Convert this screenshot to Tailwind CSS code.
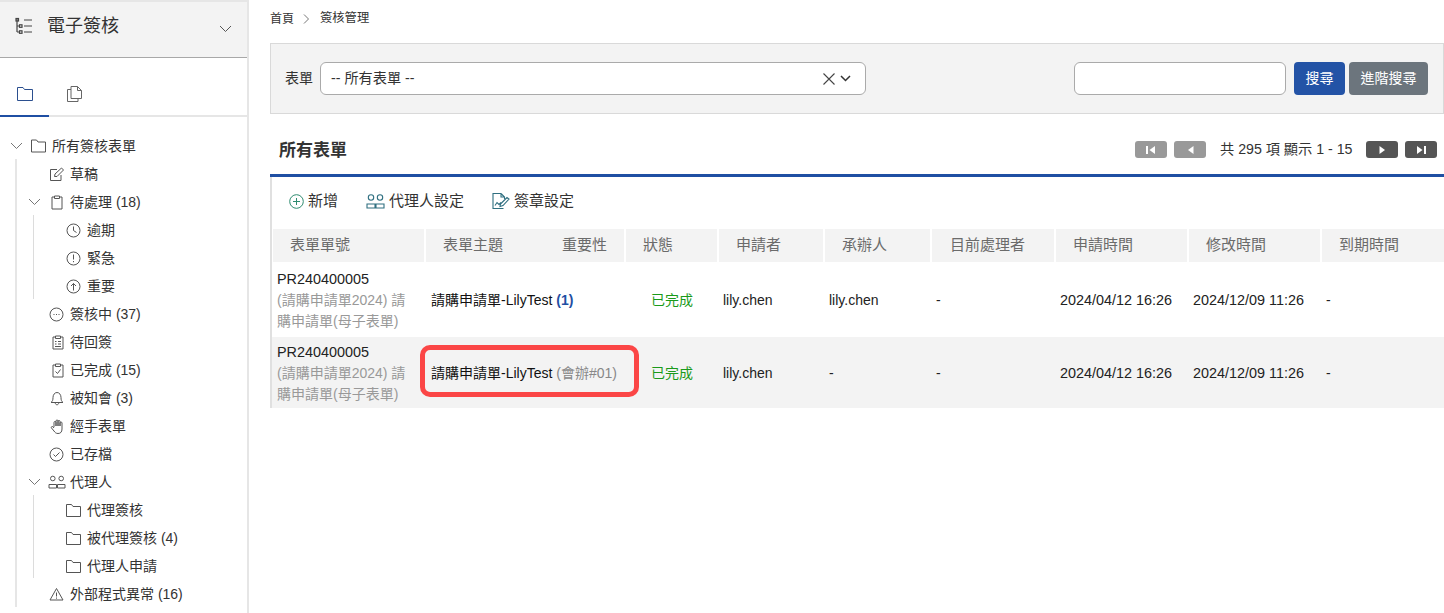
<!DOCTYPE html>
<html lang="zh-Hant">
<head>
  <meta charset="UTF-8" />
  <title>電子簽核</title>
  <script src="https://cdn.jsdelivr.net/npm/@tailwindcss/browser@4"></script>
</head>
<body class="bg-white h-[613px] overflow-hidden font-['Liberation_Sans','Noto_Sans_CJK_TC',sans-serif] text-[14px] text-[#222]">
<div class="flex h-[613px]">

  <!-- Sidebar -->
  <aside class="w-[249px] h-full shrink-0 border-r-2 border-[#e6e6e6] overflow-hidden">
    <div class="h-[58px] bg-[#f3f3f3] border-t-2 border-b border-t-[#e6e6e6] border-b-[#a8a8a8] flex items-center pl-[15px] pr-[15px] pb-[8px]">
      <svg class="mt-[2px] w-[19px] h-[19px] text-[#444]" viewBox="0 0 19 19" fill="none" stroke="currentColor" stroke-width="1.2"><path d="M2 2v13M2 9h3M2 15h3"/><rect x="1" y="1.5" width="2.5" height="2.5"/><rect x="4.5" y="7.8" width="2.5" height="2.5"/><rect x="4.5" y="13.8" width="2.5" height="2.5"/><path d="M9 3h8M9 9h8M9 15h8"/></svg>
      <span class="ml-[13px] text-[18px] text-[#333] leading-none">電子簽核</span>
      <svg class="ml-auto mt-[7px] w-[13px] h-[8px] text-[#555]" viewBox="0 0 13 8" fill="none" stroke="currentColor" stroke-width="1"><path d="M1 1l5.500 5.500L12 1"/></svg>
    </div>

    <div class="h-[59px] flex border-b-2 border-[#e6e6e6]">
      <div class="w-[49px] h-[59px] border-b-2 border-[#1f4fa3] flex justify-center pt-[29px]">
        <svg class="w-[16px] h-[14px] text-[#2b4f8f]" viewBox="0 0 16 14" fill="none" stroke="currentColor" stroke-width="1"><path d="M.5 13.500V.5h5.500l1.500 2h8v11z"/></svg>
      </div>
      <div class="w-[49px] pl-[18px] pt-[28px]">
        <svg class="w-[15px] h-[16px] text-[#666]" viewBox="0 0 15 16" fill="none" stroke="currentColor" stroke-width="1"><path d="M4 .5h6.500l4 4V12.500H4zM10.500.5v4h4M4 3.500H.5v12H11v-3"/></svg>
      </div>
    </div>

    <!-- Tree -->
    <nav class="relative pt-[15px] text-[#333]">
      <span class="absolute left-[15px] top-[42px] h-[448px] w-[2px] bg-[#e6e6e6]"></span>
      <span class="absolute left-[33px] top-[98px] h-[84px] w-[1px] bg-[#dcdcdc]"></span>
      <span class="absolute left-[33px] top-[378px] h-[83px] w-[1px] bg-[#dcdcdc]"></span>

      <div class="h-[28px] flex items-center pl-[10px] gap-[6px]">
        <svg class="w-[13px] h-[8px] text-[#777]" viewBox="0 0 13 8" fill="none" stroke="currentColor"><path d="M1 1l5.500 5.500L12 1"/></svg>
        <svg class="ml-[2px] w-[15px] h-[14px] text-[#555]" viewBox="0 0 15 14" fill="none" stroke="currentColor"><path d="M.5 13V1h5L7 3h7.500v10z"/></svg>
        <span>所有簽核表單</span>
      </div>
      <div class="h-[28px] flex items-center pl-[49px] gap-[6px]">
        <svg class="w-[15px] h-[15px] text-[#555]" viewBox="0 0 15 15" fill="none" stroke="currentColor"><path d="M12 8v5.500H1.500v-11H8M5.500 9.500l.5-2.500 6.500-6 2 2-6.500 6.500z"/></svg>
        <span>草稿</span>
      </div>
      <div class="h-[28px] flex items-center pl-[28px]">
        <svg class="w-[13px] h-[8px] text-[#777]" viewBox="0 0 13 8" fill="none" stroke="currentColor"><path d="M1 1l5.500 5.500L12 1"/></svg>
        <svg class="ml-[10px] w-[12px] h-[15px] text-[#555]" viewBox="0 0 12 15" fill="none" stroke="currentColor"><path d="M3.500 2H1v12h10V2H8.500M3.500 1h5v2.500h-5z"/></svg>
        <span class="ml-[7px]">待處理 (18)</span>
      </div>
      <div class="h-[28px] flex items-center pl-[66px] gap-[6px]">
        <svg class="w-[15px] h-[15px] text-[#555]" viewBox="0 0 15 15" fill="none" stroke="currentColor"><circle cx="7.500" cy="7.500" r="6.500"/><path d="M7.500 3.500v4l3 2"/></svg>
        <span>逾期</span>
      </div>
      <div class="h-[28px] flex items-center pl-[66px] gap-[6px]">
        <svg class="w-[15px] h-[15px] text-[#555]" viewBox="0 0 15 15" fill="none" stroke="currentColor"><circle cx="7.500" cy="7.500" r="6.500"/><path d="M7.500 3.500v5M7.500 10v1.200"/></svg>
        <span>緊急</span>
      </div>
      <div class="h-[28px] flex items-center pl-[66px] gap-[6px]">
        <svg class="w-[15px] h-[15px] text-[#555]" viewBox="0 0 15 15" fill="none" stroke="currentColor"><circle cx="7.500" cy="7.500" r="6.500"/><path d="M7.500 11.500v-7M5 7l2.500-2.500L10 7"/></svg>
        <span>重要</span>
      </div>
      <div class="h-[28px] flex items-center pl-[49px] gap-[6px]">
        <svg class="w-[15px] h-[15px] text-[#555]" viewBox="0 0 15 15" fill="none" stroke="currentColor"><circle cx="7.500" cy="7.500" r="6.500"/><path d="M4.500 7.500h1M7 7.500h1M9.500 7.500h1"/></svg>
        <span>簽核中 (37)</span>
      </div>
      <div class="h-[28px] flex items-center pl-[52px] gap-[6px]">
        <svg class="w-[12px] h-[15px] text-[#555]" viewBox="0 0 12 15" fill="none" stroke="currentColor"><path d="M3.500 2H1v12h10V2H8.500M3.500 1h5v2.500h-5zM3 6.500h1.500M6 6.500h3M3 9h1.500M6 9h3M3 11.500h6"/></svg>
        <span>待回簽</span>
      </div>
      <div class="h-[28px] flex items-center pl-[52px] gap-[6px]">
        <svg class="w-[12px] h-[15px] text-[#555]" viewBox="0 0 12 15" fill="none" stroke="currentColor"><path d="M3.500 2H1v12h10V2H8.500M3.500 1h5v2.500h-5zM3.500 8.500l2 2 3-4"/></svg>
        <span>已完成 (15)</span>
      </div>
      <div class="h-[28px] flex items-center pl-[50px] gap-[6px]">
        <svg class="w-[14px] h-[15px] text-[#555]" viewBox="0 0 14 15" fill="none" stroke="currentColor"><path d="M1 11.500c1.500-1 2-2.500 2-5S4.500 1.500 7 1.500 11 4 11 6.500s.5 4 2 5zM5.200 11.500c0 3 3.600 3 3.600 0"/></svg>
        <span>被知會 (3)</span>
      </div>
      <div class="h-[28px] flex items-center pl-[50px] gap-[6px]">
        <svg class="w-[14px] h-[15px] text-[#555]" viewBox="0 0 14 15" fill="none" stroke="currentColor"><path d="M4 8V3.500a1 1 0 012 0V7M6 7V2a1 1 0 012 0v5M8 7V2.500a1 1 0 012 0V7M10 7V4a1 1 0 012 0v6c0 3-1.500 4.500-4 4.500-2 0-3-1-4-2.500L1.500 9c-.8-1 .5-2 1.500-1.200L4 9"/></svg>
        <span>經手表單</span>
      </div>
      <div class="h-[28px] flex items-center pl-[49px] gap-[6px]">
        <svg class="w-[15px] h-[15px] text-[#555]" viewBox="0 0 15 15" fill="none" stroke="currentColor"><circle cx="7.500" cy="7.500" r="6.500"/><path d="M4.500 7.500l2 2 4-4"/></svg>
        <span>已存檔</span>
      </div>
      <div class="h-[28px] flex items-center pl-[28px]">
        <svg class="w-[13px] h-[8px] text-[#777]" viewBox="0 0 13 8" fill="none" stroke="currentColor"><path d="M1 1l5.500 5.500L12 1"/></svg>
        <svg class="ml-[7px] w-[18px] h-[14px] text-[#555]" viewBox="0 0 18 14" fill="none" stroke="currentColor"><circle cx="4.800" cy="3.500" r="2.300"/><circle cx="13.200" cy="3.500" r="2.300"/><path d="M1 13V9.500h7.500V13zM9.500 13V9.500H17V13z"/></svg>
        <span class="ml-[4px]">代理人</span>
      </div>
      <div class="h-[28px] flex items-center pl-[66px] gap-[6px]">
        <svg class="w-[15px] h-[13px] text-[#555]" viewBox="0 0 15 13" fill="none" stroke="currentColor"><path d="M.5 12.500V.5h5L7 2.500h7.500v10z"/></svg>
        <span>代理簽核</span>
      </div>
      <div class="h-[28px] flex items-center pl-[66px] gap-[6px]">
        <svg class="w-[15px] h-[13px] text-[#555]" viewBox="0 0 15 13" fill="none" stroke="currentColor"><path d="M.5 12.500V.5h5L7 2.500h7.500v10z"/></svg>
        <span>被代理簽核 (4)</span>
      </div>
      <div class="h-[28px] flex items-center pl-[66px] gap-[6px]">
        <svg class="w-[15px] h-[13px] text-[#555]" viewBox="0 0 15 13" fill="none" stroke="currentColor"><path d="M.5 12.500V.5h5L7 2.500h7.500v10z"/></svg>
        <span>代理人申請</span>
      </div>
      <div class="h-[28px] flex items-center pl-[49px] gap-[6px]">
        <svg class="w-[15px] h-[14px] text-[#555]" viewBox="0 0 15 14" fill="none" stroke="currentColor"><path d="M7.500 1.500L14 13H1zM7.500 5.500v4M7.500 10.500v1.200"/></svg>
        <span>外部程式異常 (16)</span>
      </div>
    </nav>
  </aside>

  <!-- Main -->
  <main class="flex-1 min-w-0 pl-[21px]">
    <div class="h-[43px] flex items-center text-[12px] pb-[6px] text-[#333]">
      <span>首頁</span>
      <svg class="ml-[9px] mr-[10px] w-[7px] h-[10px] text-[#777]" viewBox="0 0 7 10" fill="none" stroke="currentColor"><path d="M1 .5L5.500 5 1 9.500"/></svg>
      <span class="text-[12.300px]">簽核管理</span>
    </div>

    <!-- Search bar -->
    <div class="h-[71px] bg-[#f3f3f3] border border-[#d9d9d9] flex items-center pl-[14px] pr-[15px]">
      <span class="text-[#333]">表單</span>
      <div class="ml-[7px] w-[546px] h-[33px] bg-white border border-[#aaa] rounded-[6px] flex items-center pl-[10px] pr-[14px]">
        <span class="text-[14.200px] text-[#333]">-- 所有表單 --</span>
        <svg class="ml-auto w-[12px] h-[12px] text-[#444]" viewBox="0 0 12 12" fill="none" stroke="currentColor" stroke-width="1.100"><path d="M.5.5l11 11M11.500.5l-11 11"/></svg>
        <svg class="ml-[5px] w-[11px] h-[7px] text-[#333]" viewBox="0 0 11 7" fill="none" stroke="currentColor" stroke-width="1.500"><path d="M1 1l4.500 4.500L10 1"/></svg>
      </div>
      <div class="ml-auto w-[212px] h-[33px] bg-white border border-[#aaa] rounded-[6px]"></div>
      <button class="ml-[8px] w-[51px] h-[33px] bg-[#2353a6] text-white text-[14px] rounded-[4px]">搜尋</button>
      <button class="ml-[4px] w-[79px] h-[33px] bg-[#6c757d] text-white text-[14px] rounded-[4px]">進階搜尋</button>
    </div>

    <!-- Title + pager -->
    <div class="h-[63px] border-b-[3px] border-[#1f4fa3] flex items-center pl-[9px] pr-[7px] pt-[12px]">
      <h1 class="text-[17px] font-bold text-[#333] mt-[2px]">所有表單</h1>
      <div class="ml-auto flex items-center">
        <span class="w-[32px] h-[17px] rounded-[3px] bg-[#999] flex items-center justify-center">
          <svg class="w-[10px] h-[8px]" viewBox="0 0 10 8" fill="white"><path d="M0 0h2v8H0zM9 0v8L3.500 4z"/></svg>
        </span>
        <span class="ml-[7px] w-[32px] h-[17px] rounded-[3px] bg-[#999] flex items-center justify-center">
          <svg class="w-[7px] h-[8px]" viewBox="0 0 7 8" fill="white"><path d="M6.500 0v8L1 4z"/></svg>
        </span>
        <span class="ml-[14px] w-[133px] text-[14.200px] text-[#333] whitespace-nowrap">共 295 項 顯示 1 - 15</span>
        <span class="ml-[13px] w-[32px] h-[17px] rounded-[3px] bg-[#555] flex items-center justify-center">
          <svg class="w-[7px] h-[8px]" viewBox="0 0 7 8" fill="white"><path d="M.5 0v8L6 4z"/></svg>
        </span>
        <span class="ml-[7px] w-[32px] h-[17px] rounded-[3px] bg-[#555] flex items-center justify-center">
          <svg class="w-[10px] h-[8px]" viewBox="0 0 10 8" fill="white"><path d="M1 0v8l5.500-4zM8 0h2v8H8z"/></svg>
        </span>
      </div>
    </div>

    <!-- List panel -->
    <section class="border-l-2 border-[#e0e0e0] h-[231px] overflow-hidden">
      <div class="h-[52px] flex items-center pl-[17px] pb-[4px] text-[15px] text-[#333]">
        <svg class="w-[15px] h-[15px] text-[#2e8b6f]" viewBox="0 0 15 15" fill="none" stroke="currentColor"><circle cx="7.500" cy="7.500" r="6.800"/><path d="M7.500 4v7M4 7.500h7"/></svg>
        <span class="ml-[4px]">新增</span>
        <svg class="ml-[28px] w-[19px] h-[15px] text-[#2f6f80]" viewBox="0 0 19 15" fill="none" stroke="currentColor" stroke-width="1.100"><circle cx="5" cy="3.500" r="2.700"/><circle cx="14" cy="3.500" r="2.700"/><path d="M1 14v-4h8v4zM10 14v-4h8v4z"/></svg>
        <span class="ml-[4px]">代理人設定</span>
        <svg class="ml-[28px] w-[18px] h-[17px] text-[#2f6f80]" viewBox="0 0 18 17" fill="none" stroke="currentColor" stroke-width="1.100"><path d="M9 .5H1v15h10.500M9 .5l3.500 3.500v2M9 .5V4h3.500M3 12.500l2-3 2 2 2-2M8.500 11L15 4.500l2 1.500-6 6.500-3 1z"/></svg>
        <span class="ml-[4px]">簽章設定</span>
      </div>

      <!-- Header row -->
      <div class="grid grid-cols-[151px_198px_91px_104px_105px_122px_131px_131px_122px] gap-x-[2px] ml-[1px] h-[33px] text-[15px] text-[#6b6b6b]">
        <div class="bg-[#f3f3f3] pl-[17px] flex items-center">表單單號</div>
        <div class="bg-[#f3f3f3] pl-[17px] pr-[17px] flex items-center justify-between"><span>表單主題</span><span>重要性</span></div>
        <div class="bg-[#f3f3f3] pl-[17px] flex items-center">狀態</div>
        <div class="bg-[#f3f3f3] pl-[17px] flex items-center">申請者</div>
        <div class="bg-[#f3f3f3] pl-[17px] flex items-center">承辦人</div>
        <div class="bg-[#f3f3f3] pl-[18px] flex items-center">目前處理者</div>
        <div class="bg-[#f3f3f3] pl-[17px] flex items-center">申請時間</div>
        <div class="bg-[#f3f3f3] pl-[17px] flex items-center">修改時間</div>
        <div class="bg-[#f3f3f3] pl-[17px] flex items-center">到期時間</div>
      </div>

      <!-- Row 1 -->
      <div class="grid grid-cols-[151px_198px_91px_104px_105px_122px_131px_131px_122px] gap-x-[2px] ml-[1px] h-[75px] pt-[2px] items-center text-[#222]">
        <div class="pl-[4px] pr-[14px] leading-[21px]"><div class="text-[14.400px]">PR240400005</div><div class="text-[#999]">(請購申請單2024) 請購申請單(母子表單)</div></div>
        <div class="pl-[5px]"><span class="text-[#111]">請購申請單-LilyTest</span> <span class="font-bold text-[#1f4fa3]">(1)</span></div>
        <div class="pl-[25px] text-[#1a9a1a]">已完成</div>
        <div class="pl-[4px]">lily.chen</div>
        <div class="pl-[4px]">lily.chen</div>
        <div class="pl-[4px]">-</div>
        <div class="pl-[4px] text-[14.400px]">2024/04/12 16:26</div>
        <div class="pl-[4px] text-[14.400px]">2024/12/09 11:26</div>
        <div class="pl-[4px]">-</div>
      </div>

      <!-- Row 2 -->
      <div class="relative grid grid-cols-[151px_198px_91px_104px_105px_122px_131px_131px_122px] gap-x-[2px] h-[71px] pl-[1px] pt-[2px] items-center bg-[#f3f3f3] text-[#222]">
        <div class="pl-[4px] pr-[14px] leading-[21px]"><div class="text-[14.400px]">PR240400005</div><div class="text-[#999]">(請購申請單2024) 請購申請單(母子表單)</div></div>
        <div class="pl-[5px]"><span class="text-[#111]">請購申請單-LilyTest</span> <span class="text-[#888]">(會辦#01)</span></div>
        <div class="pl-[25px] text-[#1a9a1a]">已完成</div>
        <div class="pl-[4px]">lily.chen</div>
        <div class="pl-[4px]">-</div>
        <div class="pl-[4px]">-</div>
        <div class="pl-[4px] text-[14.400px]">2024/04/12 16:26</div>
        <div class="pl-[4px] text-[14.400px]">2024/12/09 11:26</div>
        <div class="pl-[4px]">-</div>
        <span class="absolute left-[148px] top-[8px] w-[219px] h-[52px] border-[5px] border-[#fb4646] rounded-[10px]"></span>
      </div>
    </section>
  </main>
</div>
</body>
</html>
